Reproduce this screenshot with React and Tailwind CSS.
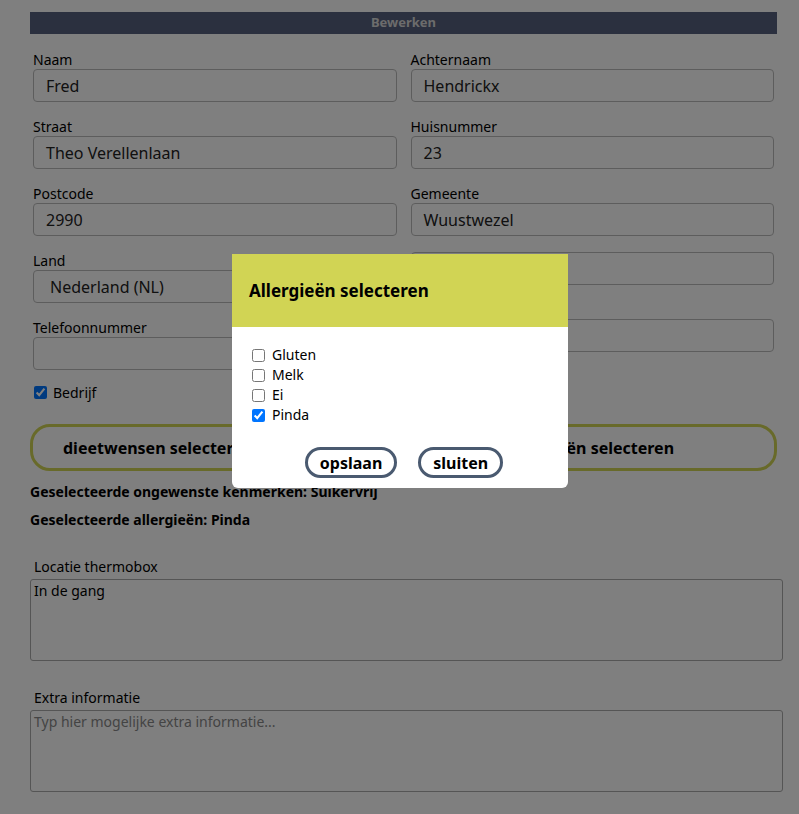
export default function App() {
  const arial = " [font-family:'Liberation_Sans',Arial,sans-serif]";
  const lbl = "text-[14px] text-black leading-[18px]";
  const inp = "h-[33px] w-full border border-[#bbb] rounded-[4px] bg-white px-[12px] text-[16px] text-[#222] flex items-center" + arial;
  const Field = ({ label, value, sel }) => (
    <div className="flex flex-col">
      <div className={lbl}>{label}</div>
      <div className={inp + (sel ? " pl-[16px]" : "")}>{value}</div>
    </div>
  );
  return (
    <div className="relative w-[799px] h-[814px] bg-white overflow-hidden [font-family:'Open_Sans',Lato,sans-serif]">
      <div className="ml-[30px] w-[747px] pt-[12px]">
        <div className="h-[22px] bg-[#56607f] text-[#d8d8d8] text-[13px] font-bold flex items-center justify-center">Bewerken</div>
        <div className="px-[3px] grid grid-cols-2 gap-x-[14px] gap-y-[16px] mt-[17px]">
          <Field label="Naam" value="Fred" />
          <Field label="Achternaam" value="Hendrickx" />
          <Field label="Straat" value="Theo Verellenlaan" />
          <Field label="Huisnummer" value="23" />
          <Field label="Postcode" value="2990" />
          <Field label="Gemeente" value="Wuustwezel" />
          <Field label="Land" value="Nederland (NL)" sel />
          <Field label="" value="" />
          <Field label="Telefoonnummer" value="" />
          <Field label="" value="" />
        </div>
        <div className="flex items-center gap-[6px] mt-[12px] ml-[4px] text-[14px]">
          <input type="checkbox" defaultChecked className="w-[13px] h-[13px]" /> Bedrijf
        </div>
        <div className="grid grid-cols-2 mt-[21px]">
          <div className={"h-[47px] rounded-[20px] border-[3px] border-[#d1d454] flex items-center pl-[30px] text-[16px] font-bold" + arial}>dieetwensen selecteren</div>
          <div className={"h-[47px] rounded-[20px] border-[3px] border-[#d1d454] flex items-center justify-center text-[16px] font-bold" + arial}>allergieën selecteren</div>
        </div>
        <div className="text-[14px] font-bold mt-[10px]">Geselecteerde ongewenste kenmerken: Suikervrij</div>
        <div className="text-[14px] font-bold mt-[7px]">Geselecteerde allergieën: Pinda</div>
        <div className="mt-[26px] ml-[4px] text-[14px]">Locatie thermobox</div>
        <div className="w-[753px] h-[82px] border border-[#aaa] rounded-[3px] px-[3px] text-[14px] mt-[2px]">In de gang</div>
        <div className="mt-[26px] ml-[4px] text-[14px]">Extra informatie</div>
        <div className="w-[753px] h-[82px] border border-[#aaa] rounded-[3px] px-[3px] text-[14px] mt-[2px] text-[#888]">Typ hier mogelijke extra informatie...</div>
      </div>
      <div className="absolute inset-0 bg-black/50" />
      <div className="absolute left-[232px] top-[254px] w-[336px] bg-white rounded-b-[6px] overflow-hidden">
        <div className="h-[73px] bg-[#d1d454] flex items-center pl-[17px] text-[17px] font-bold">Allergieën selecteren</div>
        <div className="pt-[18px] pl-[20px] text-[14px] leading-[20px]">
          {["Gluten", "Melk", "Ei", "Pinda"].map((a) => (
            <div key={a} className="flex items-center gap-[7px]">
              <input type="checkbox" defaultChecked={a === "Pinda"} className="w-[13px] h-[13px]" />
              {a}
            </div>
          ))}
        </div>
        <div className="flex justify-center gap-[21px] mt-[22px] pb-[10px] ml-[8px]">
          <div className={"h-[31px] px-[12px] rounded-full border-[3px] border-[#4a5a70] flex items-center text-[16px] font-bold" + arial}>opslaan</div>
          <div className={"h-[31px] px-[12px] rounded-full border-[3px] border-[#4a5a70] flex items-center text-[16px] font-bold" + arial}>sluiten</div>
        </div>
      </div>
    </div>
  );
}
